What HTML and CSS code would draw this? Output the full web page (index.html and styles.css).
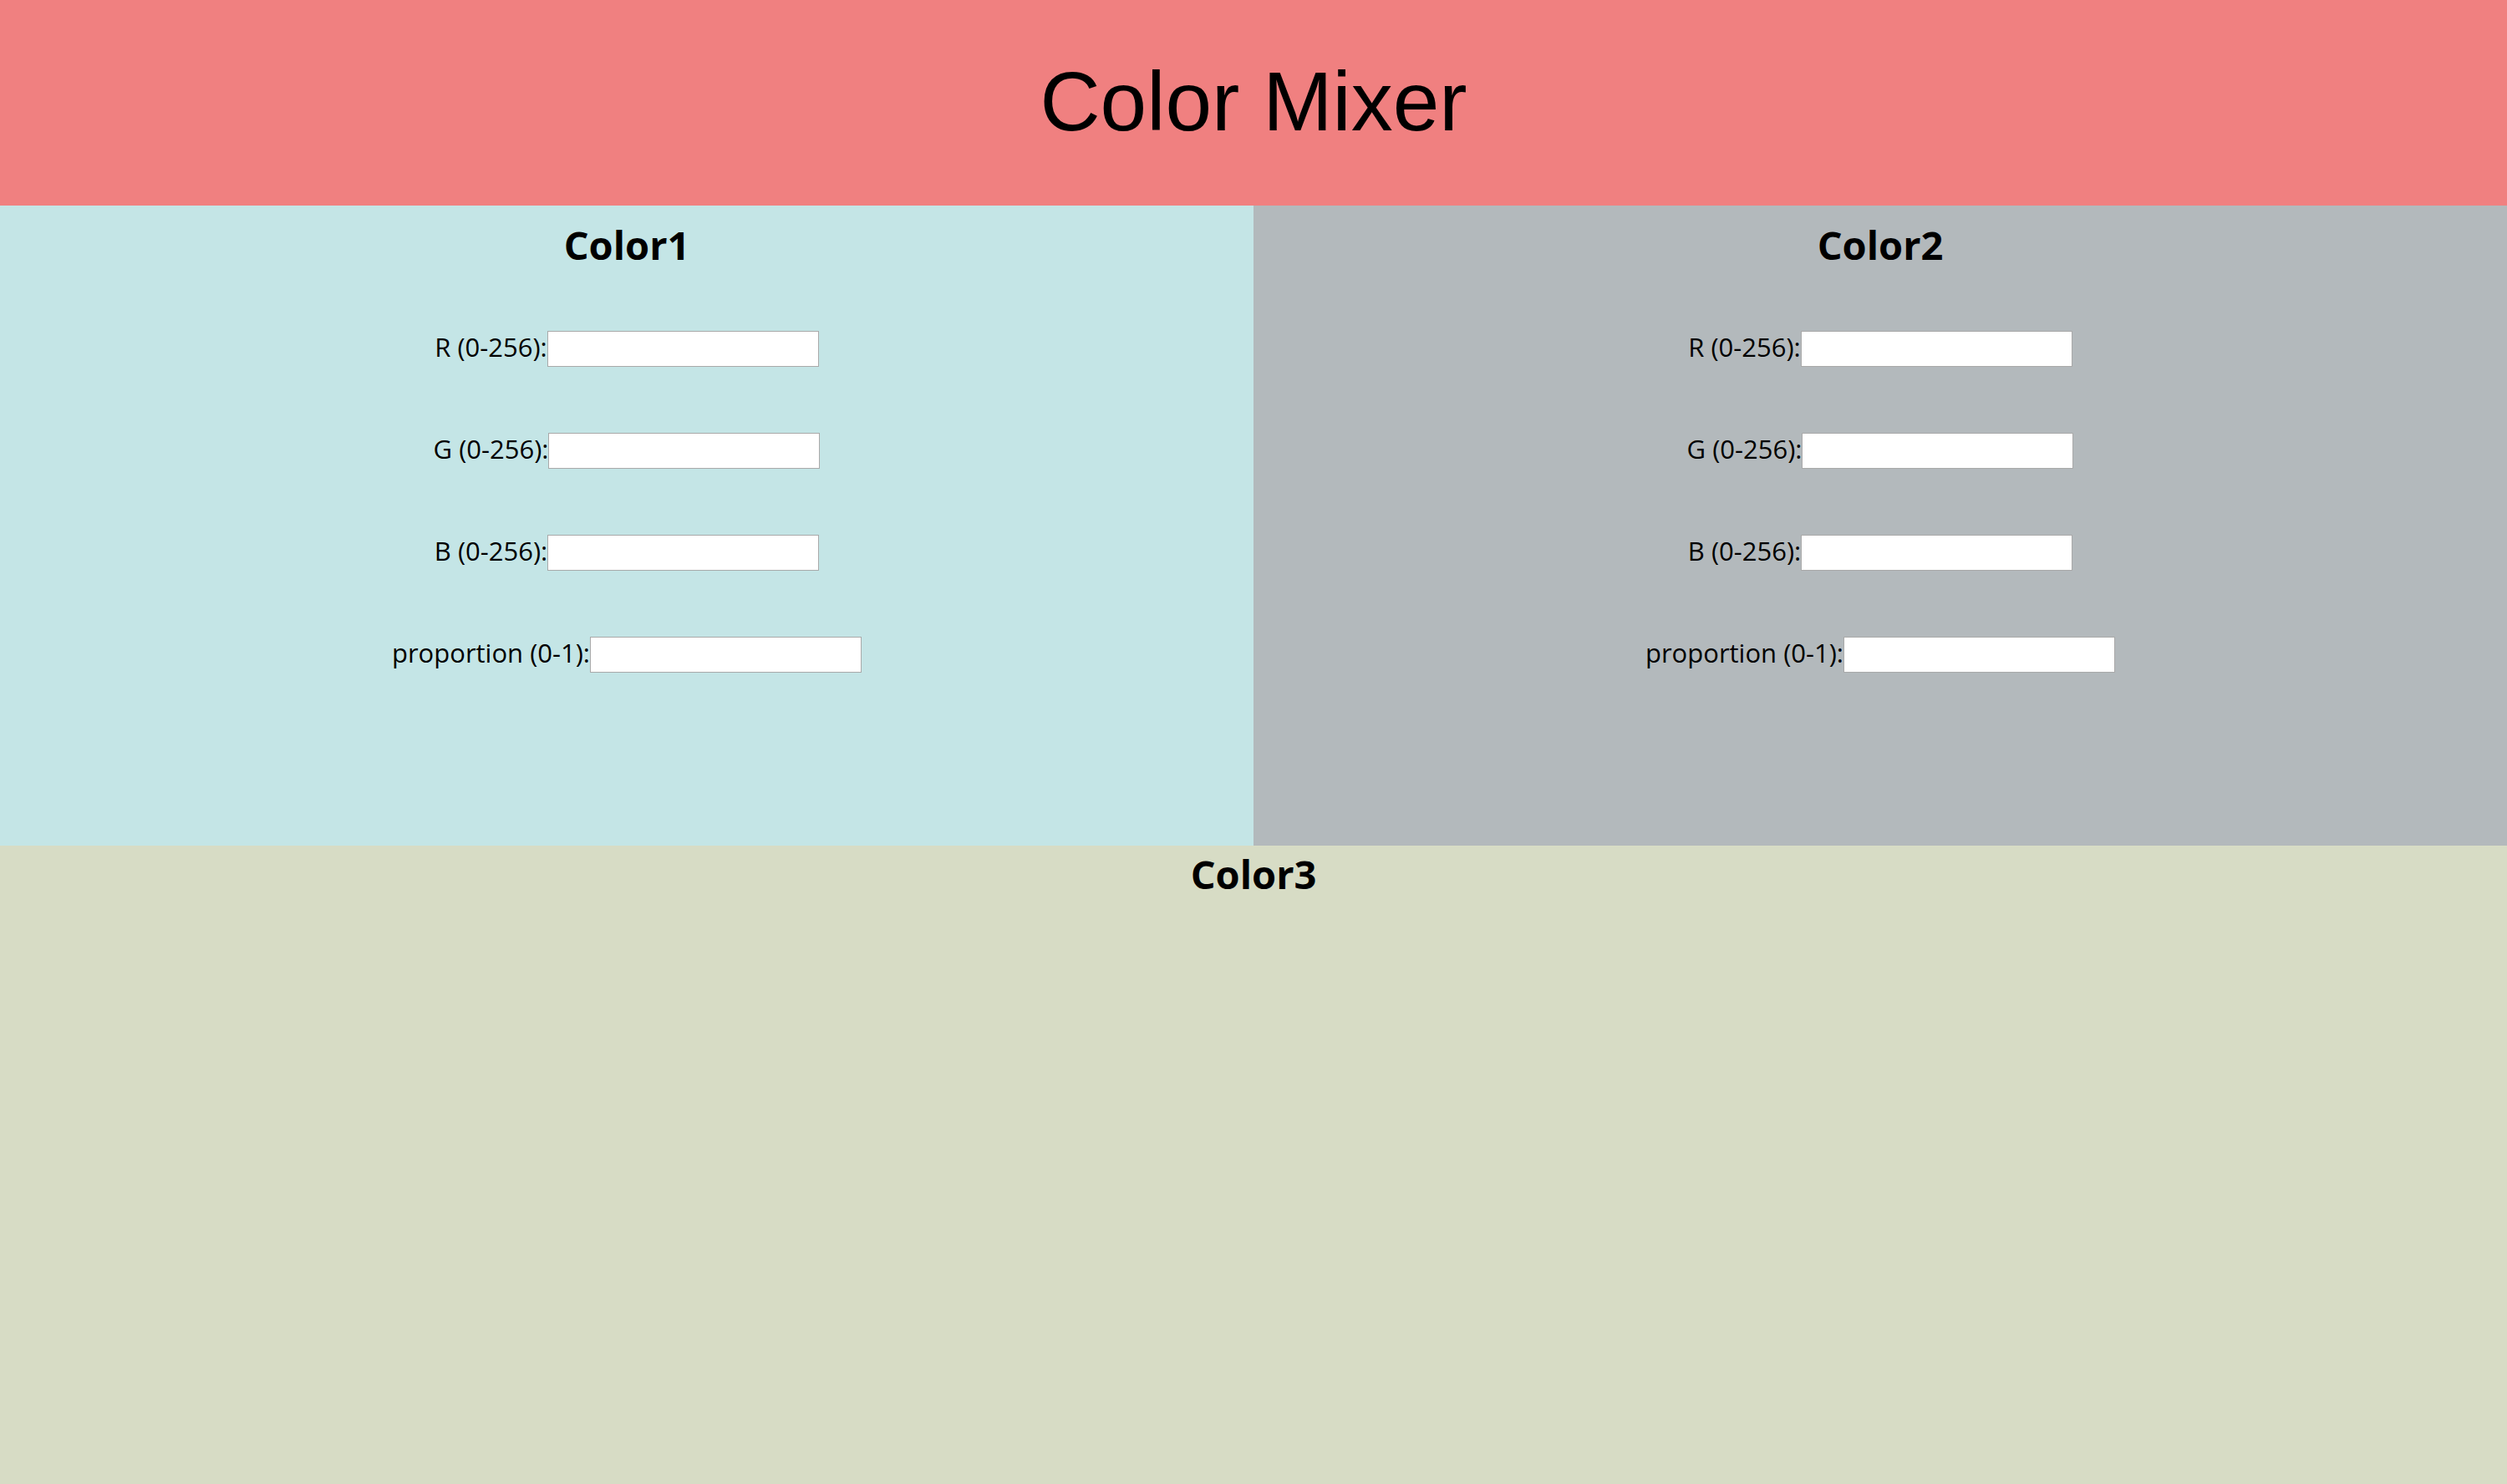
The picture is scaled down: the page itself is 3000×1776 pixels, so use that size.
FILE: index.html
```html
<!DOCTYPE html>
<html lang="en">
<head>
<meta charset="utf-8">
<title>Color Mixer</title>
<link rel="stylesheet" href="styles.css">
</head>
<body>
<div class="page">
  <header class="header"><h1 class="title">Color Mixer</h1></header>
  <div class="mixers">
    <section class="panel panel-one">
      <h2 class="panel-title">Color1</h2>
      <div class="field"><label class="field-label">R (0-256):</label><input class="field-input" type="text"></div>
      <div class="field"><label class="field-label">G (0-256):</label><input class="field-input" type="text"></div>
      <div class="field"><label class="field-label">B (0-256):</label><input class="field-input" type="text"></div>
      <div class="field"><label class="field-label">proportion (0-1):</label><input class="field-input" type="text"></div>
    </section>
    <section class="panel panel-two">
      <h2 class="panel-title">Color2</h2>
      <div class="field"><label class="field-label">R (0-256):</label><input class="field-input" type="text"></div>
      <div class="field"><label class="field-label">G (0-256):</label><input class="field-input" type="text"></div>
      <div class="field"><label class="field-label">B (0-256):</label><input class="field-input" type="text"></div>
      <div class="field"><label class="field-label">proportion (0-1):</label><input class="field-input" type="text"></div>
    </section>
  </div>
  <section class="result">
    <h2 class="result-title">Color3</h2>
  </section>
</div>
</body>
</html>
```
FILE: styles.css
```css
html, body {
  margin: 0;
  padding: 0;
  height: 100%;
}
body {
  font-family: "Open Sans", "Noto Sans", sans-serif;
  color: #000;
}
.page {
  display: flex;
  flex-direction: column;
  height: 100vh;
}
.header {
  height: 246px;
  flex: none;
  background: #f08080;
  display: flex;
  align-items: center;
  justify-content: center;
}
.title {
  margin: 0;
  font-family: "Liberation Sans", Arial, sans-serif;
  font-weight: 400;
  font-size: 100px;
  line-height: 115px;
  padding-bottom: 3px;
}
.mixers {
  display: grid;
  grid-template-columns: 1fr 1fr;
  height: 766px;
  flex: none;
}
.panel {
  display: flex;
  flex-direction: column;
  align-items: center;
  gap: 79px;
  padding-top: 23px;
}
.panel-one { background: #c4e5e6; }
.panel-two { background: #b3b9bc; }
.panel-title, .result-title {
  margin: 0;
  font-size: 47px;
  line-height: 48px;
  font-weight: 700;
}
.field {
  display: flex;
  align-items: center;
  height: 43px;
}
.field-label {
  font-size: 31px;
  line-height: 43px;
  position: relative;
  top: -2px;
}
.field-input {
  box-sizing: border-box;
  width: 325px;
  height: 43px;
  margin: 0;
  padding: 0 4px;
  border: 1px solid #a9a9a9;
  background: #fff;
  font: inherit;
  font-size: 28px;
}
.result {
  flex: 1;
  background: #d7dcc5;
  display: flex;
  flex-direction: column;
  align-items: center;
  padding-top: 10px;
}
```
